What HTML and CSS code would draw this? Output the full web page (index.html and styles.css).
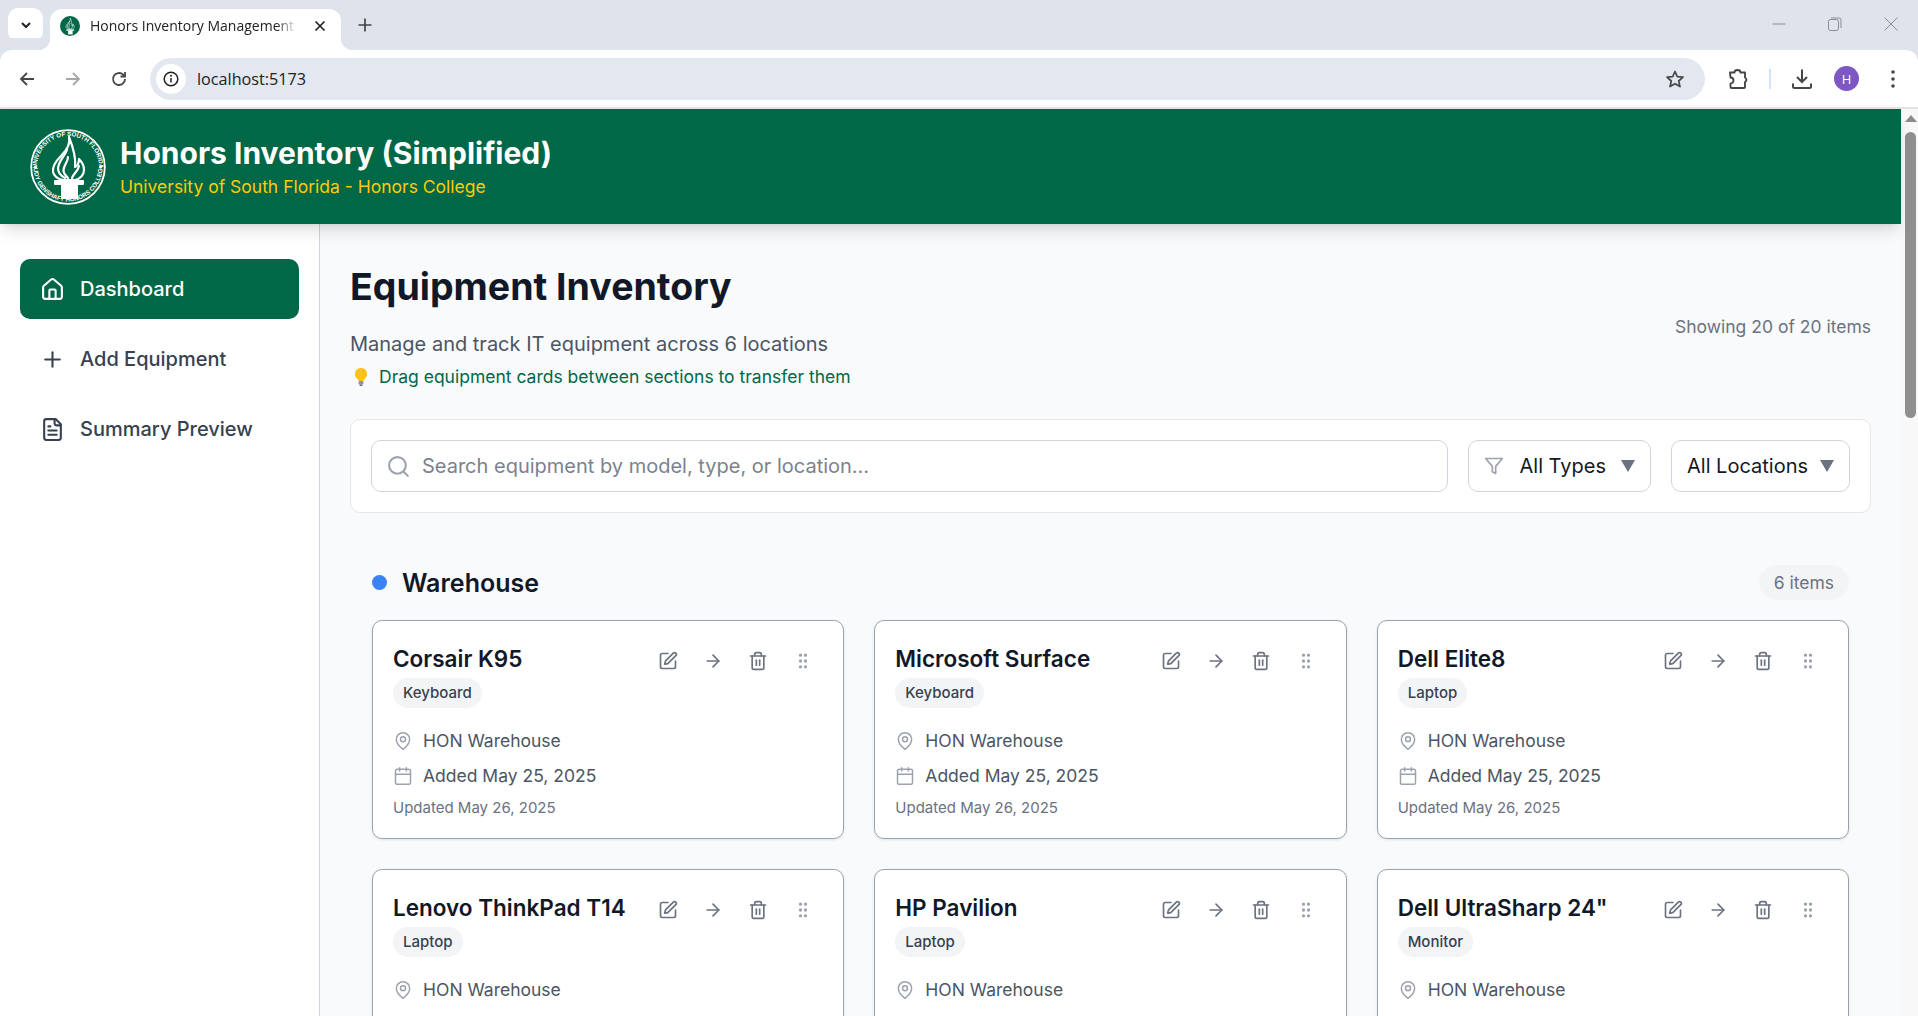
FILE: index.html
```html
<!DOCTYPE html>
<html lang="en">
<head>
  <meta charset="UTF-8" />
  <meta name="viewport" content="width=device-width, initial-scale=1.0" />
  <title>Honors Inventory Management</title>
  <link rel="stylesheet" href="styles.css">
</head>
<body>
  <svg class="defs" width="0" height="0" aria-hidden="true">
    <defs>
      <path id="arc-top" d="M7 38a31 31 0 0 1 62 0" />
      <path id="arc-bottom" d="M3.500 38a34.500 34.500 0 0 0 69 0" />
      <symbol id="flame" viewBox="0 0 76 76">
        <path d="M39 8C41 16 36 22 31 27C26 32 22 37 23 43C24 47 28 50 33 51L45 51C50 50 54 46 54 41C54 36 52 33 49 30C49 34 47 37 45 38C46 30 43 18 39 8Z" fill="none" stroke="currentColor" stroke-width="2.200" stroke-linejoin="round" />
        <path d="M37 20C36 26 29 31 28 39C28 44 31 47 35 49M38 28C38 33 33 37 33.500 42C34 45 36 47 38 49M49 37C48 42 44 44 42 49" fill="none" stroke="currentColor" stroke-width="2.200" stroke-linecap="round" />
        <rect x="24" y="51" width="30" height="5" rx="1" fill="currentColor" />
        <rect x="31" y="56" width="17" height="14" fill="currentColor" />
      </symbol>
      <symbol id="i-home" viewBox="0 0 24 24"><path d="M15 21v-8a1 1 0 0 0-1-1h-4a1 1 0 0 0-1 1v8" /><path d="M3 10a2 2 0 0 1 .709-1.528l7-5.999a2 2 0 0 1 2.582 0l7 5.999A2 2 0 0 1 21 10v9a2 2 0 0 1-2 2H5a2 2 0 0 1-2-2z" /></symbol>
      <symbol id="i-plus" viewBox="0 0 24 24"><path d="M5 12h14" /><path d="M12 5v14" /></symbol>
      <symbol id="i-file" viewBox="0 0 24 24"><path d="M15 2H6a2 2 0 0 0-2 2v16a2 2 0 0 0 2 2h12a2 2 0 0 0 2-2V7Z" /><path d="M14 2v4a2 2 0 0 0 2 2h4" /><path d="M10 9H8" /><path d="M16 13H8" /><path d="M16 17H8" /></symbol>
      <symbol id="i-search" viewBox="0 0 24 24"><circle cx="11" cy="11" r="8" /><path d="m21 21-4.300-4.300" /></symbol>
      <symbol id="i-filter" viewBox="0 0 24 24"><polygon points="22 3 2 3 10 12.460 10 19 14 21 14 12.460 22 3" /></symbol>
      <symbol id="i-pen" viewBox="0 0 24 24"><path d="M12 3H5a2 2 0 0 0-2 2v14a2 2 0 0 0 2 2h14a2 2 0 0 0 2-2v-7" /><path d="M18.375 2.625a1 1 0 0 1 3 3l-9.013 9.014a2 2 0 0 1-.853.505l-2.873.84a.5.5 0 0 1-.62-.62l.84-2.873a2 2 0 0 1 .506-.852z" /></symbol>
      <symbol id="i-arrow" viewBox="0 0 24 24"><path d="M5 12h14" /><path d="m12 5 7 7-7 7" /></symbol>
      <symbol id="i-trash" viewBox="0 0 24 24"><path d="M3 6h18" /><path d="M19 6v14c0 1-1 2-2 2H7c-1 0-2-1-2-2V6" /><path d="M8 6V4c0-1 1-2 2-2h4c1 0 2 1 2 2v2" /><path d="M10 11v6" /><path d="M14 11v6" /></symbol>
      <symbol id="i-grip" viewBox="0 0 24 24"><circle cx="9" cy="12" r="1" /><circle cx="9" cy="5" r="1" /><circle cx="9" cy="19" r="1" /><circle cx="15" cy="12" r="1" /><circle cx="15" cy="5" r="1" /><circle cx="15" cy="19" r="1" /></symbol>
      <symbol id="i-pin" viewBox="0 0 24 24"><path d="M20 10c0 6-8 12-8 12s-8-6-8-12a8 8 0 0 1 16 0Z" /><circle cx="12" cy="10" r="3" /></symbol>
      <symbol id="i-calendar" viewBox="0 0 24 24"><path d="M8 2v4" /><path d="M16 2v4" /><rect width="18" height="18" x="3" y="4" rx="2" /><path d="M3 10h18" /></symbol>
    </defs>
  </svg>

  <div class="tabstrip">
    <div class="tab-search">
      <svg width="14" height="14" viewBox="0 0 14 14"><path d="M3 5l4 4 4-4" fill="none" stroke="#202124" stroke-width="2" /></svg>
    </div>
    <div class="tab">
      <span class="favicon"><svg width="20" height="20"><use href="#flame" /></svg></span>
      <span class="tab-title">Honors Inventory Management</span>
      <svg class="tab-close" width="12" height="12" viewBox="0 0 12 12"><path d="M1.500 1.500l9 9M10.500 1.500l-9 9" stroke="#202124" stroke-width="1.700" /></svg>
    </div>
    <svg class="new-tab" width="14" height="14" viewBox="0 0 14 14"><path d="M7 0.500v13M0.500 7h13" stroke="#444746" stroke-width="1.700" /></svg>
    <div class="window-controls">
      <svg width="14" height="14" viewBox="0 0 14 14"><path d="M0.500 7h13" stroke="#8a8d91" /></svg>
      <svg width="14" height="14" viewBox="0 0 14 14"><rect x="0.500" y="2.500" width="10" height="11" rx="2" fill="none" stroke="#8a8d91" /><path d="M3 1h8a2 2 0 0 1 2 2v8" fill="none" stroke="#8a8d91" /></svg>
      <svg width="14" height="14" viewBox="0 0 14 14"><path d="M0.500 0.500l13 13M13.500 0.500l-13 13" stroke="#8a8d91" /></svg>
    </div>
  </div>

  <div class="toolbar">
    <svg class="nav-btn" width="18" height="18" viewBox="0 0 18 18"><path d="M16 9H3M9 3L3 9l6 6" fill="none" stroke="#444746" stroke-width="1.800" /></svg>
    <svg class="nav-btn" width="18" height="18" viewBox="0 0 18 18"><path d="M2 9h13M9 3l6 6-6 6" fill="none" stroke="#a5a8ab" stroke-width="1.800" /></svg>
    <svg class="nav-btn" width="18" height="18" viewBox="0 0 18 18"><path d="M15 9a6 6 0 1 1-1.800-4.300L15 6.500M15 2v4.500h-4.500" fill="none" stroke="#444746" stroke-width="1.800" /></svg>
    <div class="omnibox">
      <span class="site-info"><svg width="16" height="16" viewBox="0 0 16 16"><circle cx="8" cy="8" r="6.800" fill="none" stroke="#202124" stroke-width="1.500" /><path d="M8 7v4.500" stroke="#202124" stroke-width="1.500" /><circle cx="8" cy="4.800" r="1" fill="#202124" /></svg></span>
      <span class="url">localhost:5173</span>
      <svg class="star" width="20" height="20" viewBox="0 0 20 20"><path d="M10 2.500l2.300 5.200 5.700.5-4.300 3.800 1.300 5.600L10 14.700l-5 2.900 1.300-5.600L2 8.200l5.700-.5z" fill="none" stroke="#444746" stroke-width="1.700" stroke-linejoin="round" /></svg>
    </div>
    <div class="toolbar-end">
      <svg width="22" height="22" viewBox="0 0 22 22"><path d="M3 4.500h4.500a3 2.500 0 0 1 6 0H18v5a2.500 2.500 0 0 1 0 4.500V19a1 1 0 0 1-1 1H4.500a1 1 0 0 1-1-1v-3.500a3 3 0 0 0 0-6z" fill="none" stroke="#444746" stroke-width="1.900" stroke-linejoin="round" /></svg>
      <span class="toolbar-sep"></span>
      <svg width="22" height="22" viewBox="0 0 22 22"><path d="M11 1.500v12M6 9l5 5 5-5" fill="none" stroke="#444746" stroke-width="2" /><path d="M2 15.500v3a1.500 1.500 0 0 0 1.500 1.500h15a1.500 1.500 0 0 0 1.500-1.500v-3" fill="none" stroke="#444746" stroke-width="2" /></svg>
      <span class="avatar">H</span>
      <svg width="6" height="20" viewBox="0 0 6 20"><circle cx="3" cy="3" r="1.800" fill="#444746" /><circle cx="3" cy="10" r="1.800" fill="#444746" /><circle cx="3" cy="17" r="1.800" fill="#444746" /></svg>
    </div>
  </div>

  <div class="viewport">
    <div class="page">
      <header class="app-header">
        <svg class="logo" width="76" height="76" viewBox="0 0 76 76">
          <circle cx="38" cy="38" r="36.800" fill="none" stroke="#fff" stroke-width="1.800" />
          <circle cx="5.500" cy="38" r="1.500" fill="#fff" />
          <circle cx="70.500" cy="38" r="1.500" fill="#fff" />
          <text class="logo-text"><textPath href="#arc-top" startOffset="50%" text-anchor="middle">UNIVERSITY OF SOUTH FLORIDA</textPath></text>
          <text class="logo-text"><textPath href="#arc-bottom" startOffset="50%" text-anchor="middle">JUDY GENSHAFT HONORS COLLEGE</textPath></text>
          <use href="#flame" width="76" height="76" />
        </svg>
        <div>
          <h1>Honors Inventory (Simplified)</h1>
          <p class="app-sub">University of South Florida - Honors College</p>
        </div>
      </header>

      <div class="app-body">
        <nav class="sidebar">
          <a class="nav-item active"><svg class="icon nav-icon"><use href="#i-home" /></svg>Dashboard</a>
          <a class="nav-item"><svg class="icon nav-icon"><use href="#i-plus" /></svg>Add Equipment</a>
          <a class="nav-item"><svg class="icon nav-icon"><use href="#i-file" /></svg>Summary Preview</a>
        </nav>

        <main class="main">
          <div class="page-head">
            <div>
              <h2>Equipment Inventory</h2>
              <p class="lead">Manage and track IT equipment across 6 locations</p>
              <p class="hint">
                <svg width="18" height="20" viewBox="0 0 18 20"><path d="M9 1a6 6 0 0 0-3.500 10.900c.7.600 1 1.300 1 2.100h5c0-.8.300-1.500 1-2.100A6 6 0 0 0 9 1z" fill="#fcc21b" /><rect x="6.500" y="14" width="5" height="3.500" rx="1" fill="#9b8ab5" /><rect x="7.500" y="17.500" width="3" height="1.500" rx=".7" fill="#6d5d85" /></svg>
                Drag equipment cards between sections to transfer them
              </p>
            </div>
            <span class="showing">Showing 20 of 20 items</span>
          </div>

          <div class="filters">
            <div class="search">
              <svg class="icon search-icon"><use href="#i-search" /></svg>
              <span>Search equipment by model, type, or location...</span>
            </div>
            <div class="select select-types">
              <svg class="icon filter-icon"><use href="#i-filter" /></svg>
              <span>All Types</span>
              <i class="caret"></i>
            </div>
            <div class="select">
              <span>All Locations</span>
              <i class="caret"></i>
            </div>
          </div>

          <section class="section">
            <div class="section-head">
              <span class="dot"></span>
              <h3>Warehouse</h3>
              <span class="count">6 items</span>
            </div>
            <div class="cards">
              <article class="card">
                <div class="card-top">
                  <div class="card-name">Corsair K95</div>
                  <div class="card-actions">
                    <svg class="icon"><use href="#i-pen" /></svg>
                    <svg class="icon"><use href="#i-arrow" /></svg>
                    <svg class="icon"><use href="#i-trash" /></svg>
                    <svg class="icon grip"><use href="#i-grip" /></svg>
                  </div>
                </div>
                <span class="tag">Keyboard</span>
                <div class="meta"><svg class="icon"><use href="#i-pin" /></svg>HON Warehouse</div>
                <div class="meta"><svg class="icon"><use href="#i-calendar" /></svg>Added May 25, 2025</div>
                <div class="updated">Updated May 26, 2025</div>
              </article>
              <article class="card">
                <div class="card-top">
                  <div class="card-name">Microsoft Surface</div>
                  <div class="card-actions">
                    <svg class="icon"><use href="#i-pen" /></svg>
                    <svg class="icon"><use href="#i-arrow" /></svg>
                    <svg class="icon"><use href="#i-trash" /></svg>
                    <svg class="icon grip"><use href="#i-grip" /></svg>
                  </div>
                </div>
                <span class="tag">Keyboard</span>
                <div class="meta"><svg class="icon"><use href="#i-pin" /></svg>HON Warehouse</div>
                <div class="meta"><svg class="icon"><use href="#i-calendar" /></svg>Added May 25, 2025</div>
                <div class="updated">Updated May 26, 2025</div>
              </article>
              <article class="card">
                <div class="card-top">
                  <div class="card-name">Dell Elite8</div>
                  <div class="card-actions">
                    <svg class="icon"><use href="#i-pen" /></svg>
                    <svg class="icon"><use href="#i-arrow" /></svg>
                    <svg class="icon"><use href="#i-trash" /></svg>
                    <svg class="icon grip"><use href="#i-grip" /></svg>
                  </div>
                </div>
                <span class="tag">Laptop</span>
                <div class="meta"><svg class="icon"><use href="#i-pin" /></svg>HON Warehouse</div>
                <div class="meta"><svg class="icon"><use href="#i-calendar" /></svg>Added May 25, 2025</div>
                <div class="updated">Updated May 26, 2025</div>
              </article>
              <article class="card">
                <div class="card-top">
                  <div class="card-name">Lenovo ThinkPad T14</div>
                  <div class="card-actions">
                    <svg class="icon"><use href="#i-pen" /></svg>
                    <svg class="icon"><use href="#i-arrow" /></svg>
                    <svg class="icon"><use href="#i-trash" /></svg>
                    <svg class="icon grip"><use href="#i-grip" /></svg>
                  </div>
                </div>
                <span class="tag">Laptop</span>
                <div class="meta"><svg class="icon"><use href="#i-pin" /></svg>HON Warehouse</div>
                <div class="meta"><svg class="icon"><use href="#i-calendar" /></svg>Added May 25, 2025</div>
                <div class="updated">Updated May 26, 2025</div>
              </article>
              <article class="card">
                <div class="card-top">
                  <div class="card-name">HP Pavilion</div>
                  <div class="card-actions">
                    <svg class="icon"><use href="#i-pen" /></svg>
                    <svg class="icon"><use href="#i-arrow" /></svg>
                    <svg class="icon"><use href="#i-trash" /></svg>
                    <svg class="icon grip"><use href="#i-grip" /></svg>
                  </div>
                </div>
                <span class="tag">Laptop</span>
                <div class="meta"><svg class="icon"><use href="#i-pin" /></svg>HON Warehouse</div>
                <div class="meta"><svg class="icon"><use href="#i-calendar" /></svg>Added May 25, 2025</div>
                <div class="updated">Updated May 26, 2025</div>
              </article>
              <article class="card">
                <div class="card-top">
                  <div class="card-name">Dell UltraSharp 24"</div>
                  <div class="card-actions">
                    <svg class="icon"><use href="#i-pen" /></svg>
                    <svg class="icon"><use href="#i-arrow" /></svg>
                    <svg class="icon"><use href="#i-trash" /></svg>
                    <svg class="icon grip"><use href="#i-grip" /></svg>
                  </div>
                </div>
                <span class="tag">Monitor</span>
                <div class="meta"><svg class="icon"><use href="#i-pin" /></svg>HON Warehouse</div>
                <div class="meta"><svg class="icon"><use href="#i-calendar" /></svg>Added May 25, 2025</div>
                <div class="updated">Updated May 26, 2025</div>
              </article>
            </div>
          </section>
        </main>
      </div>
    </div>

    <div class="scrollbar">
      <i class="scroll-up"></i>
      <div class="scroll-thumb"></div>
    </div>
  </div>
</body>
</html>
```

FILE: styles.css
```css
* {
  box-sizing: border-box;
}
html, body {
  height: 100%;
}
body {
  margin: 0;
  font-family: Inter, "Liberation Sans", sans-serif;
  background: #fff;
  display: flex;
  flex-direction: column;
  overflow: hidden;
}
.defs {
  position: absolute;
}
h1, h2, h3, p {
  margin: 0;
}

/* browser frame */
.tabstrip {
  height: 50px;
  flex: none;
  background: #dee3ec;
  display: flex;
  align-items: flex-end;
  padding-left: 8px;
}
.tab-search {
  width: 35px;
  height: 34px;
  margin-bottom: 8px;
  background: #fff;
  border-radius: 10px;
  display: flex;
  align-items: center;
  justify-content: center;
}
.tab {
  position: relative;
  width: 291px;
  height: 41px;
  margin-left: 7px;
  padding: 0 15px 8px 10px;
  background: #fff;
  border-radius: 12px 12px 0 0;
  display: flex;
  align-items: center;
  font: 14px "Open Sans", sans-serif;
  color: #202124;
}
.tab::before, .tab::after {
  content: "";
  position: absolute;
  bottom: 0;
  width: 12px;
  height: 12px;
}
.tab::before {
  left: -12px;
  background: radial-gradient(circle at 0 0, transparent 12px, #fff 12.500px);
}
.tab::after {
  right: -12px;
  background: radial-gradient(circle at 100% 0, transparent 12px, #fff 12.500px);
}
.favicon {
  width: 20px;
  height: 20px;
  border-radius: 50%;
  background: #006747;
  color: #fff;
  flex: none;
  display: flex;
}
.tab-title {
  margin-left: 10px;
  width: 207px;
  white-space: nowrap;
  overflow: hidden;
  -webkit-mask-image: linear-gradient(to right, #000 90%, transparent);
  mask-image: linear-gradient(to right, #000 90%, transparent);
}
.tab-close {
  margin-left: auto;
}
.new-tab {
  margin: 0 0 18px 17px;
}
.window-controls {
  margin-left: auto;
  align-self: flex-start;
  margin-top: 17px;
  display: flex;
  gap: 42px;
  padding-right: 20px;
}
.toolbar {
  height: 59px;
  flex: none;
  background: #fff;
  border-bottom: 2px solid #e3e3e3;
  border-radius: 12px 12px 0 0;
  display: flex;
  align-items: center;
  padding: 0 22px 0 18px;
  box-shadow: 0 -12px 0 #dee3ec;
}
.nav-btn {
  margin-right: 28px;
}
.nav-btn:nth-child(3) {
  margin-right: 22px;
}
.omnibox {
  flex: 1;
  height: 42px;
  background: #e3e7f0;
  border-radius: 21px;
  display: flex;
  align-items: center;
  padding: 0 20px 0 6px;
  font: 16.200px "Open Sans", sans-serif;
  color: #202124;
}
.site-info {
  width: 30px;
  height: 30px;
  border-radius: 50%;
  background: #fff;
  display: flex;
  align-items: center;
  justify-content: center;
}
.url {
  margin-left: 11px;
}
.star {
  margin-left: auto;
}
.toolbar-end {
  display: flex;
  align-items: center;
  margin-left: 22px;
}
.toolbar-sep {
  width: 2px;
  height: 20px;
  background: #d3e3fd;
  margin: 0 20px;
}
.avatar {
  width: 25px;
  height: 25px;
  border-radius: 50%;
  background: #7e57c2;
  color: #fff;
  font: 13px "Open Sans", sans-serif;
  display: flex;
  align-items: center;
  justify-content: center;
  margin: 0 31px 0 21px;
}
.viewport {
  flex: 1;
  min-height: 0;
  display: flex;
}
.page {
  flex: 1;
  min-width: 0;
  display: flex;
  flex-direction: column;
}
.scrollbar {
  width: 17px;
  flex: none;
  background: #f8f8f8;
  padding: 6px 2px 0 4px;
}
.scroll-up {
  display: block;
  width: 0;
  margin: 0 auto 10px;
  border: 6px solid transparent;
  border-top: 0;
  border-bottom: 7px solid #8b8b8b;
}
.scroll-thumb {
  height: 286px;
  background: #8f8f8f;
  border-radius: 6px;
}

/* app */
.app-header {
  position: relative;
  z-index: 1;
  height: 115px;
  flex: none;
  background: #006747;
  box-shadow: 0 10px 15px -3px rgba(0,0,0,0.12), 0 4px 6px -4px rgba(0,0,0,0.1);
  display: flex;
  align-items: center;
  gap: 14px;
  padding: 0 0 0 30px;
  color: #fff;
}
.logo {
  flex: none;
  color: #fff;
}
.logo-text {
  font: 700 6.200px "Liberation Sans", sans-serif;
  fill: #fff;
}
.app-header h1 {
  font-size: 30px;
  font-weight: 700;
  line-height: 36px;
}
.app-sub {
  margin-top: 4px;
  font-size: 17.500px;
  line-height: 24px;
  color: #ffcb05;
}
.app-body {
  flex: 1;
  min-height: 0;
  display: flex;
}
.sidebar {
  width: 320px;
  flex: none;
  background: #fff;
  border-right: 1px solid #d1d5db;
  padding: 35px 20px 0;
  display: flex;
  flex-direction: column;
  gap: 10px;
}
.icon {
  width: 20px;
  height: 20px;
  flex: none;
  fill: none;
  stroke: currentColor;
  stroke-width: 2;
  stroke-linecap: round;
  stroke-linejoin: round;
}
.nav-item {
  height: 60px;
  border-radius: 10px;
  display: flex;
  align-items: center;
  gap: 15px;
  padding: 0 20px;
  font-size: 20px;
  font-weight: 500;
  color: #374151;
}
.nav-item.active {
  background: #006747;
  color: #fff;
}
.nav-icon {
  width: 25px;
  height: 25px;
}
.main {
  flex: 1;
  min-width: 0;
  background: #f9fafb;
  padding: 40px 30px 0;
  overflow: hidden;
}
.page-head {
  display: flex;
  align-items: center;
  justify-content: space-between;
}
.page-head h2 {
  font-size: 37.500px;
  font-weight: 700;
  line-height: 45px;
  color: #111827;
}
.lead {
  margin-top: 21px;
  font-size: 20px;
  line-height: 28px;
  color: #4b5563;
}
.hint {
  margin-top: 6px;
  font-size: 17.500px;
  line-height: 25px;
  color: #006747;
  display: flex;
  align-items: center;
  gap: 9px;
}
.hint svg {
  margin-left: 2px;
}
.showing {
  font-size: 17.500px;
  color: #6b7280;
}
.filters {
  margin-top: 30px;
  height: 94px;
  background: #fff;
  border: 1px solid #e5e7eb;
  border-radius: 10px;
  display: flex;
  align-items: center;
  gap: 20px;
  padding: 0 20px;
}
.search {
  flex: 1;
  height: 52px;
  background: #fff;
  border: 1px solid #d1d5db;
  border-radius: 10px;
  display: flex;
  align-items: center;
  gap: 11px;
  padding: 0 14px;
  font-size: 20px;
  color: #7b828e;
}
.search-icon {
  width: 25px;
  height: 25px;
  color: #9ca3af;
}
.select {
  height: 52px;
  background: #fff;
  border: 1px solid #d1d5db;
  border-radius: 10px;
  display: flex;
  align-items: center;
  padding: 0 15px;
  font-size: 20px;
  color: #111827;
}
.filter-icon {
  width: 20px;
  height: 20px;
  color: #9ca3af;
  margin-right: 16px;
}
.caret {
  width: 0;
  margin-left: 12px;
  border: 7px solid transparent;
  border-bottom: 0;
  border-top: 12px solid #6b7280;
}
.select-types .caret {
  margin-left: 15px;
}
.section {
  padding: 0 22px;
}
.section-head {
  margin-top: 52px;
  height: 35px;
  display: flex;
  align-items: center;
}
.dot {
  width: 15px;
  height: 15px;
  border-radius: 50%;
  background: #3b82f6;
  margin-right: 15px;
}
.section-head h3 {
  font-size: 25px;
  font-weight: 600;
  color: #111827;
}
.count {
  margin-left: auto;
  height: 35px;
  padding: 0 15px;
  border-radius: 18px;
  background: #f3f4f6;
  font-size: 17.500px;
  line-height: 35px;
  color: #6b7280;
}
.cards {
  margin-top: 20px;
  display: grid;
  grid-template-columns: repeat(3, 1fr);
  gap: 30px;
}
.card {
  height: 219px;
  background: #fff;
  border: 1px solid #9ca3af;
  border-radius: 10px;
  box-shadow: 0 1px 3px rgba(0,0,0,0.1);
  padding: 20px;
  overflow: hidden;
}
.card-top {
  display: flex;
  align-items: flex-start;
  justify-content: space-between;
}
.card-name {
  font-size: 22.500px;
  font-weight: 600;
  line-height: 35px;
  color: #111827;
  white-space: nowrap;
}
.card-actions {
  display: flex;
  gap: 25px;
  margin: 10px 0 0;
  padding-right: 10px;
  color: #6b7280;
}
.grip {
  color: #9ca3af;
}
.tag {
  display: inline-block;
  margin-top: 2px;
  height: 30px;
  padding: 0 10px;
  border-radius: 15px;
  background: #f3f4f6;
  font-size: 15px;
  font-weight: 500;
  line-height: 30px;
  color: #374151;
}
.meta {
  display: flex;
  align-items: center;
  gap: 10px;
  margin-top: 10px;
  height: 25px;
  font-size: 17.500px;
  color: #4b5563;
}
.tag + .meta {
  margin-top: 20px;
}
.meta .icon {
  color: #9ca3af;
  stroke-width: 1.800;
}
.updated {
  margin-top: 9px;
  font-size: 15px;
  line-height: 22px;
  color: #6b7280;
}
```
